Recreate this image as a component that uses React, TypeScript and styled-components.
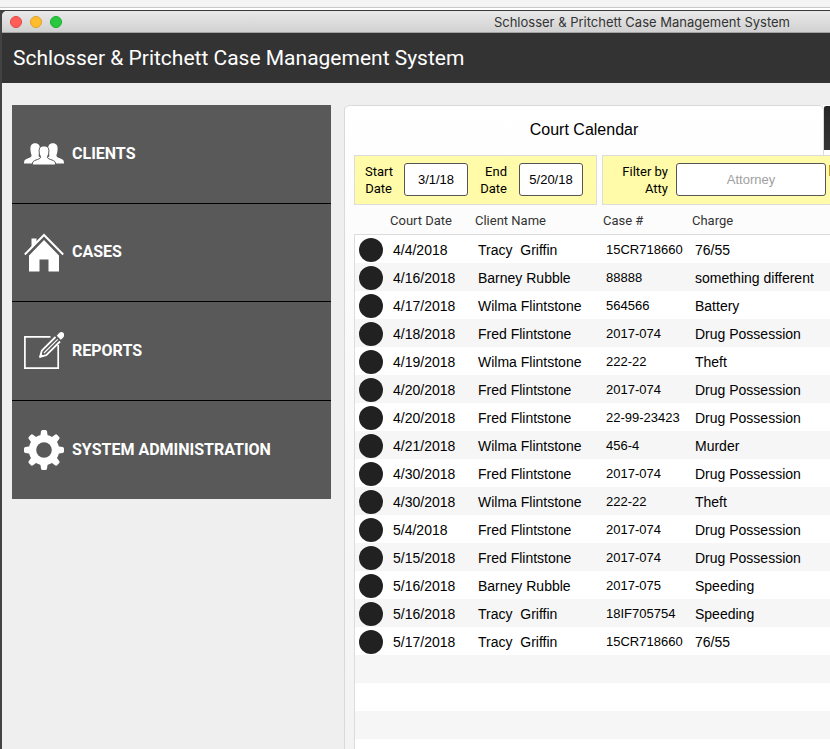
import React from 'react';
import styled, { createGlobalStyle } from 'styled-components';

const Global = createGlobalStyle`
  *, *::before, *::after { box-sizing: border-box; }
  body { margin: 0; background: #ffffff; font-family: "Liberation Sans", Arial, sans-serif; }
  button, input { font: inherit; }
`;

const humanist = 'Roboto, "Noto Sans", Tahoma, sans-serif';

const Page = styled.div`
  display: flex;
  flex-direction: column;
  height: 100vh;
  min-height: 500px;
  overflow: hidden;
`;

const BackdropBar = styled.div`
  flex: none;
  height: 8px;
  background: #f4f4f4;
  border-bottom: 1px solid #c8c8c8;
  margin-bottom: 2px;
`;

const Desktop = styled.div`
  flex: 1;
  min-height: 0;
  display: flex;
  padding-left: 2px;
  background: #434343;
  border-top: 1px solid #3a3a3a;
`;

const Window = styled.div`
  flex: 1;
  min-width: 0;
  display: flex;
  flex-direction: column;
  background: #efefef;
  border-top-left-radius: 5px;
  overflow: hidden;
`;

const TitleBar = styled.header`
  flex: none;
  display: flex;
  align-items: center;
  justify-content: space-between;
  height: 22px;
  padding: 0 40px 0 8px;
  background: linear-gradient(#e9e9e9, #d1d1d1);
  border-bottom: 1px solid #a3a3a3;
`;

const Lights = styled.div`
  display: flex;
  gap: 8px;
`;

const Light = styled.button<{ $fill: string; $edge: string }>`
  width: 12px;
  height: 12px;
  padding: 0;
  border: 1px solid ${p => p.$edge};
  border-radius: 50%;
  background: ${p => p.$fill};
`;

const WindowTitle = styled.span`
  font-family: Inter, Roboto, sans-serif;
  font-size: 13px;
  line-height: 20px;
  color: #333333;
  white-space: nowrap;
`;

const Banner = styled.div`
  flex: none;
  display: flex;
  align-items: center;
  height: 50px;
  padding-left: 11px;
  background: #333333;
`;

const BannerTitle = styled.h1`
  margin: 0;
  font-family: ${humanist};
  font-size: 21px;
  line-height: 30px;
  font-weight: 400;
  color: #ffffff;
  white-space: nowrap;
`;

const Content = styled.div`
  flex: 1;
  min-height: 0;
  display: flex;
  align-items: stretch;
  gap: 13px;
  padding: 22px 0 0 10px;
`;

const Sidebar = styled.nav`
  flex: none;
  align-self: flex-start;
  display: grid;
  grid-auto-rows: 1fr;
  width: 319px;
  min-height: 394px;
  background: #595959;
`;

const SideLink = styled.a`
  display: flex;
  align-items: center;
  gap: 8px;
  padding-left: 12px;
  color: #ffffff;
  text-decoration: none;
  text-transform: uppercase;
  font-family: Roboto, "Liberation Sans", sans-serif;
  font-size: 16px;
  line-height: 24px;
  font-weight: 700;
  white-space: nowrap;
  border-bottom: 1px solid #000000;
  &:last-child { border-bottom: 0; }
`;

const Icon = styled.svg`
  flex: none;
  width: 40px;
  height: 40px;
`;

const Panel = styled.main`
  flex: 1;
  min-width: 0;
  display: flex;
  flex-direction: column;
  border-left: 1px solid #d9d9d9;
  border-top-left-radius: 5px;
  background: linear-gradient(#ffffff, #fcfcfc 130px, #f3f3f3);
`;

const Tabs = styled.div`
  flex: none;
  display: flex;
  height: 50px;
`;

const Tab = styled.button`
  flex: 1;
  padding: 0 0 2px;
  border: 0;
  border-top: 1px solid #d9d9d9;
  border-right: 1px solid #d9d9d9;
  border-radius: 5px 5px 0 0;
  background: transparent;
  font-size: 16px;
  line-height: 20px;
  color: #000000;
`;

const NextTab = styled.button`
  flex: none;
  width: 6px;
  height: 44px;
  margin-top: 1px;
  padding: 0;
  border: 0;
  border-top-left-radius: 2px;
  background: linear-gradient(#262626, #363636);
`;

const Filters = styled.form`
  flex: none;
  display: flex;
  gap: 5px;
  padding-left: 9px;
`;

const FilterBox = styled.div<{ $grow?: boolean }>`
  flex: ${p => (p.$grow ? '1' : 'none')};
  display: flex;
  justify-content: ${p => (p.$grow ? 'flex-end' : 'flex-start')};
  align-items: center;
  height: 50px;
  padding: ${p => (p.$grow ? '0' : '0 13px 0 10px')};
  background: #fffba9;
  border: 1px solid #dcdcdc;
  ${p => p.$grow && 'border-right: 0;'}
`;

const FilterLabel = styled.label<{ $width: number }>`
  width: ${p => p.$width}px;
  font-family: ${humanist};
  font-size: 13px;
  line-height: 17px;
  text-align: right;
  color: #000000;
`;

const FilterInput = styled.input<{ $width: number; $gap: number }>`
  width: ${p => p.$width}px;
  height: 33px;
  margin: 0 0 2px ${p => p.$gap}px;
  padding: 0;
  border: 1px solid #555555;
  border-radius: 3px;
  background: #ffffff;
  text-align: center;
  font-size: 13px;
  color: #000000;
  &::placeholder { color: #a0a0a0; opacity: 1; }
`;

const FilterMarker = styled.span`
  align-self: flex-start;
  width: 1px;
  height: 11px;
  margin: 9px 0 0 3px;
  background: #d9962e;
`;

const CaseTable = styled.table`
  flex: none;
  width: calc(100% - 9px);
  margin-left: 9px;
  table-layout: fixed;
  border-collapse: separate;
  border-spacing: 0;
  font-size: 14px;
  line-height: 18px;
  color: #000000;
`;

const Column = styled.col<{ $width?: number }>`
  ${p => p.$width && `width: ${p.$width}px;`}
`;

const HeadCell = styled.th`
  height: 30px;
  padding: 2px 0 0;
  border-bottom: 1px solid #dcdcdc;
  font-family: ${humanist};
  font-size: 13px;
  font-weight: 400;
  text-align: left;
  color: #333333;
  white-space: nowrap;
`;

const Row = styled.tr`
  background: #ffffff;
  &:nth-child(even) { background: #f6f6f6; }
`;

const Cell = styled.td<{ $small?: boolean }>`
  height: 28px;
  padding: 2px 0 0 3px;
  font-size: ${p => (p.$small ? 13 : 14)}px;
  white-space: pre;
  &:first-child { border-left: 1px solid #dcdcdc; }
`;

const OpenButton = styled.button`
  display: block;
  width: 24px;
  height: 24px;
  margin-left: 1px;
  padding: 0;
  border: 0;
  border-radius: 50%;
  background: #212121;
`;

const EmptyRows = styled.div`
  flex: 1;
  margin-left: 9px;
  border-left: 1px solid #dcdcdc;
  background: repeating-linear-gradient(#f6f6f6 0 28px, #ffffff 28px 56px);
`;

const PeopleIcon = () => (
  <Icon viewBox="0 0 40 40" fill="#fff" aria-hidden="true">
    <path d="M0 29.500c0-3 .8-3.800 3-4.700 2.600-1 4.300-1.600 4.500-2.800.2-1.200-.5-2.300-.8-4-.5-2.700-.5-5.500.6-7 1.500-2.200 6.200-2.200 7.700 0 1.100 1.500 1 4.300.5 7-.3 1.700-1.100 2.800-.9 4 .2 1.200 2.400 1.800 4.900 2.800v4.700z" />
    <path d="M40 29.500c0-3-.8-3.800-3-4.700-2.600-1-4.300-1.600-4.500-2.800-.2-1.200.5-2.300.8-4 .5-2.700.5-5.500-.6-7-1.500-2.200-6.200-2.200-7.700 0-1.100 1.500-1 4.300-.5 7 .3 1.700 1.100 2.800.9 4-.2 1.200-2.400 1.800-4.900 2.800v4.700z" />
    <path stroke="#595959" strokeWidth="1" d="M8.300 31c0-3.200 1-4 3.700-5 2.600-1 4.400-1.400 4.600-2.700.1-1-.9-1.700-1.200-3.300-.4-2.500-.5-5 .6-6.500 1.500-2.100 6.500-2.100 8 0 1.100 1.500 1 4 .6 6.500-.3 1.600-1.300 2.300-1.200 3.300.2 1.300 2 1.700 4.600 2.700 2.700 1 3.700 1.800 3.700 5z" />
  </Icon>
);

const HouseIcon = () => (
  <Icon viewBox="0 0 40 40" aria-hidden="true">
    <path fill="#fff" d="M7.500 6.500h5v4l-5 5zM5 23.500 20 8l15 15.500V39.500H24.500V27.500h-9v12H5z" />
    <path fill="none" stroke="#595959" strokeWidth="2" d="M2 24.500 20 5.500l18 19" />
    <path fill="none" stroke="#fff" strokeWidth="2" d="M.8 22.500 20 3l19.200 19.500" />
  </Icon>
);

const EditIcon = () => (
  <Icon viewBox="0 0 40 40" fill="none" stroke="#fff" aria-hidden="true">
    <path strokeWidth="1.700" d="M26.500 5.800H.9v31.300h33.300V14" />
    <path strokeWidth="1.800" fill="#595959" strokeLinejoin="round" d="m31.500 6-13.700 13.700-1.800 6.200 6.300-1.700L36 10.500" />
    <path strokeWidth="1.100" d="M33.700 8.300 20 22" />
    <path fill="#fff" stroke="none" d="m15.500 26.500.9-4.500 3.600 3.600z" />
    <path fill="#fff" stroke="none" d="m32.700 4.800 2.300-2.600c3-3.300 7.300 1 4.200 4.200l-2.400 2.400z" />
  </Icon>
);

const GearIcon = () => (
  <Icon viewBox="0 0 40 40" aria-hidden="true">
    <g fill="#fff">
      {[0, 45, 90, 135].map(a => (
        <path key={a} transform={`rotate(${a} 20 20)`} d="M16 8 17 1.500Q17.300 0 18.500 0h3Q22.700 0 23 1.500L24 8v24l-1 6.500q-.3 1.500-1.500 1.500h-3q-1.200 0-1.500-1.500L16 32z" />
      ))}
    </g>
    <circle cx="20" cy="20" r="11.500" fill="none" stroke="#fff" strokeWidth="7.500" />
    <circle cx="20" cy="20" r="7.800" fill="#595959" />
  </Icon>
);

const nav = [
  { label: 'Clients', icon: <PeopleIcon /> },
  { label: 'Cases', icon: <HouseIcon /> },
  { label: 'Reports', icon: <EditIcon /> },
  { label: 'System Administration', icon: <GearIcon /> },
];

const rows = [
  ['4/4/2018', 'Tracy  Griffin', '15CR718660', '76/55'],
  ['4/16/2018', 'Barney Rubble', '88888', 'something different'],
  ['4/17/2018', 'Wilma Flintstone', '564566', 'Battery'],
  ['4/18/2018', 'Fred Flintstone', '2017-074', 'Drug Possession'],
  ['4/19/2018', 'Wilma Flintstone', '222-22', 'Theft'],
  ['4/20/2018', 'Fred Flintstone', '2017-074', 'Drug Possession'],
  ['4/20/2018', 'Fred Flintstone', '22-99-23423', 'Drug Possession'],
  ['4/21/2018', 'Wilma Flintstone', '456-4', 'Murder'],
  ['4/30/2018', 'Fred Flintstone', '2017-074', 'Drug Possession'],
  ['4/30/2018', 'Wilma Flintstone', '222-22', 'Theft'],
  ['5/4/2018', 'Fred Flintstone', '2017-074', 'Drug Possession'],
  ['5/15/2018', 'Fred Flintstone', '2017-074', 'Drug Possession'],
  ['5/16/2018', 'Barney Rubble', '2017-075', 'Speeding'],
  ['5/16/2018', 'Tracy  Griffin', '18IF705754', 'Speeding'],
  ['5/17/2018', 'Tracy  Griffin', '15CR718660', '76/55'],
];

export default function App() {
  return (
    <Page>
      <Global />
      <BackdropBar />
      <Desktop>
        <Window>
          <TitleBar>
            <Lights>
              <Light $fill="#ff5f57" $edge="#e2463f" aria-label="Close" />
              <Light $fill="#ffbd2e" $edge="#dfa023" aria-label="Minimize" />
              <Light $fill="#28c940" $edge="#1aab29" aria-label="Zoom" />
            </Lights>
            <WindowTitle>Schlosser &amp; Pritchett Case Management System</WindowTitle>
          </TitleBar>
          <Banner>
            <BannerTitle>Schlosser &amp; Pritchett Case Management System</BannerTitle>
          </Banner>
          <Content>
            <Sidebar>
              {nav.map(item => (
                <SideLink key={item.label} href="#">
                  {item.icon}
                  {item.label}
                </SideLink>
              ))}
            </Sidebar>
            <Panel>
              <Tabs>
                <Tab type="button">Court Calendar</Tab>
                <NextTab type="button" aria-label="Next tab" />
              </Tabs>
              <Filters>
                <FilterBox>
                  <FilterLabel $width={27} htmlFor="start">Start Date</FilterLabel>
                  <FilterInput $width={64} $gap={12} id="start" defaultValue="3/1/18" />
                  <FilterLabel $width={39} htmlFor="end">End<br />Date</FilterLabel>
                  <FilterInput $width={64} $gap={12} id="end" defaultValue="5/20/18" />
                </FilterBox>
                <FilterBox $grow>
                  <FilterLabel $width={60} htmlFor="attorney">Filter by Atty</FilterLabel>
                  <FilterInput $width={150} $gap={8} id="attorney" placeholder="Attorney" />
                  <FilterMarker />
                </FilterBox>
              </Filters>
              <CaseTable>
                <colgroup>
                  <Column $width={36} />
                  <Column $width={85} />
                  <Column $width={128} />
                  <Column $width={89} />
                  <Column />
                </colgroup>
                <thead>
                  <tr>
                    <HeadCell aria-label="Open" />
                    <HeadCell>Court Date</HeadCell>
                    <HeadCell>Client Name</HeadCell>
                    <HeadCell>Case #</HeadCell>
                    <HeadCell>Charge</HeadCell>
                  </tr>
                </thead>
                <tbody>
                  {rows.map(([date, client, number, charge], i) => (
                    <Row key={i}>
                      <Cell><OpenButton type="button" aria-label={`Open ${number}`} /></Cell>
                      <Cell>{date}</Cell>
                      <Cell>{client}</Cell>
                      <Cell $small>{number}</Cell>
                      <Cell>{charge}</Cell>
                    </Row>
                  ))}
                </tbody>
              </CaseTable>
              <EmptyRows />
            </Panel>
          </Content>
        </Window>
      </Desktop>
    </Page>
  );
}
